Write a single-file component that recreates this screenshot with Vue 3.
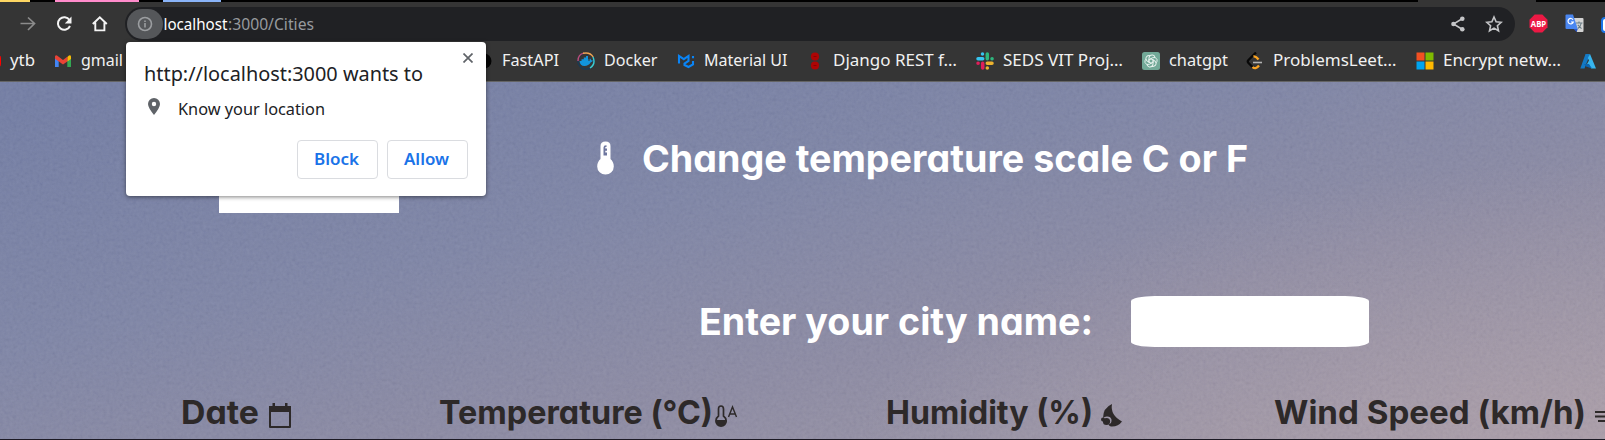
<script setup>
import { h } from 'vue'

// Single line of text whose drawn width is fixed.
const FitText = (p) =>
  h('svg', { class: 'fit', width: p.w, height: p.line, 'aria-label': p.text }, [
    h('text', { x: 0, y: p.base, textLength: p.w, lengthAdjust: 'spacingAndGlyphs' }, p.text),
  ])
FitText.props = ['text', 'w', 'line', 'base']

const bookmarks = [
  { id: 'ytb', label: 'ytb', w: 25 },
  { id: 'gmail', label: 'gmail', w: 42 },
  { id: 'fastapi', label: 'FastAPI', w: 57 },
  { id: 'docker', label: 'Docker', w: 53.5 },
  { id: 'mui', label: 'Material UI', w: 83.5 },
  { id: 'django', label: 'Django REST f…', w: 124 },
  { id: 'slack', label: 'SEDS VIT Proj…', w: 120 },
  { id: 'gpt', label: 'chatgpt', w: 59 },
  { id: 'leet', label: 'ProblemsLeet…', w: 123.5 },
  { id: 'ms', label: 'Encrypt netw…', w: 118 },
  { id: 'azure', label: '', w: 0 },
]
</script>

<template>
  <div class="window">
    <div class="tabs">
      <i class="yellow"></i><i class="pink"></i><i class="blue"></i><i class="active"></i>
    </div>

    <div class="toolbar">
      <svg class="nav" width="125" height="40" viewBox="0 0 125 40" fill="none">
        <path d="M20.5 21.500H34M28 15.500L34.500 21.500L28 28" stroke="#8b8b8b" stroke-width="1.700" />
        <path d="M69.500 18A6.300 6.300 0 1 0 70 24" stroke="#f4f4f4" stroke-width="2" />
        <path d="M71.500 14.500V21.500H64.800Z" fill="#f4f4f4" />
        <path d="M92.800 22L99.800 15.200L106.800 22M95.300 20.500V28.400H104.400V20.500" stroke="#f4f4f4" stroke-width="1.900" />
      </svg>
      <div class="omnibox">
        <span class="info">
          <svg width="16" height="16" viewBox="0 0 16 16" fill="none" stroke="#9c9ea1" stroke-width="1.600"><circle cx="8" cy="8" r="6.500" /><path d="M8 7V11.500M8 4.500V6" /></svg>
        </span>
        <svg class="url" width="152" height="34">
          <text x="0.500" y="23" textLength="64" lengthAdjust="spacingAndGlyphs">localhost</text>
          <text x="65" y="23" textLength="86" lengthAdjust="spacingAndGlyphs">:3000/Cities</text>
        </svg>
        <svg class="share" width="14" height="16" viewBox="0 0 14 16"><path d="M11.500 2.500L2.500 8L11.500 13.500" fill="none" stroke="#c4c5c7" stroke-width="1.500" /><g fill="#c4c5c7"><circle cx="11.300" cy="2.700" r="2.300" /><circle cx="2.500" cy="8" r="2.300" /><circle cx="11.300" cy="13.300" r="2.300" /></g></svg>
        <svg class="star" width="18" height="18" viewBox="0 0 18 18"><path d="M9 2L11.100 6.800L16.200 7.300L12.400 10.700L13.500 15.800L9 13.100L4.500 15.800L5.600 10.700L1.800 7.300L6.900 6.800Z" fill="none" stroke="#c4c5c7" stroke-width="1.600" /></svg>
      </div>
      <svg class="abp" width="19" height="19" viewBox="0 0 19 19"><path d="M5.700.500H13.300L18.500 5.700V13.300L13.300 18.500H5.700L.500 13.300V5.700Z" fill="#ec1944" /><text x="1.800" y="12.900" textLength="15.400" lengthAdjust="spacingAndGlyphs">ABP</text></svg>
      <svg class="translate" width="19" height="19" viewBox="0 0 19 19"><path d="M8 4H17.500Q18.500 4 18.500 5V17Q18.500 18 17.500 18H12Z" fill="#d4d4d4" /><path d="M1.500.500H8L12.800 15H1.500Q.500 15 .500 14V1.500Q.500.500 1.500.500Z" fill="#4a86f0" /><path d="M8.600 15H12.800L11.600 18Z" fill="#2b56c4" /><path d="M8 5.700A2.700 2.700 0 1 0 8.300 8H6" fill="none" stroke="#fff" stroke-width="1.200" /><path d="M11 9H17.500M14 7.500V9M16.300 9Q15.500 13 12.800 14.500M12.800 10.800L16.500 14.700" fill="none" stroke="#687b83" stroke-width="1.100" /></svg>
      <i class="edge"></i>
    </div>

    <div class="bookmarks">
      <div v-for="b in bookmarks" :key="b.id" class="bookmark" :class="b.id">
        <svg class="fav" width="18" height="18" viewBox="0 0 18 18" fill="none">
          <rect v-if="b.id === 'ytb'" x="0" y="3" width="18" height="12" rx="3" fill="#f00" />
          <g v-else-if="b.id === 'gmail'">
            <path d="M1 4V15H4.700V8Z" fill="#4285f4" /><path d="M13.300 8V15H17V4Z" fill="#34a853" />
            <path d="M13.300 5L15 3.500Q17 2.500 17 5V7L13.300 9.600Z" fill="#fbbc04" />
            <path d="M1 5Q1 2.500 3 3.500L9 8L13.300 4.800V9.500L9 12.600L1 6.800Z" fill="#ea4335" />
          </g>
          <circle v-else-if="b.id === 'fastapi'" cx="9" cy="9" r="7.500" fill="#050505" />
          <g v-else-if="b.id === 'docker'">
            <circle cx="9" cy="9" r="8.200" stroke="#173a56" stroke-width="1.300" />
            <path d="M1 9Q1 2 7 1.100" stroke="#bd4c79" stroke-width="1.400" /><path d="M6 1.300Q13-.300 16.200 5" stroke="#f1a350" stroke-width="1.400" /><path d="M16 5Q19 12 13 16" stroke="#3ccbd0" stroke-width="1.400" />
            <path d="M2.500 9H12.500Q12.300 7.500 13 6.500Q14 7.300 14.200 8.300L16 8.600Q15.500 10 13.800 10.200Q11.500 14 7.500 14Q3 14 2.500 9Z" fill="#1295dc" /><path d="M4.500 7.200H11.500V9H4.500ZM6.800 5.500H10V8H6.800ZM9 4H11V8H9Z" fill="#1295dc" />
          </g>
          <path v-else-if="b.id === 'mui'" d="M2 11.500V4L6.800 7.200L11.500 4V9L7.500 11.500V13L11.500 15L16 12.500V9M16 4V6.300" stroke="#0a84f5" stroke-width="2.100" />
          <g v-else-if="b.id === 'django'" fill="#ad0505"><circle cx="9" cy="4.500" r="4.100" /><circle cx="9" cy="13.500" r="4.100" /><path d="M7.500 4.500H10.500M7.500 13.500H10.500" stroke="#8a0000" /></g>
          <g v-else-if="b.id === 'slack'" stroke-width="3.500" stroke-linecap="round">
            <path d="M6.500 2V2.100M2 6.700H6.700" stroke="#36c5f0" /><path d="M11.300 2V6.700M16 6.700H16.100" stroke="#2eb67d" /><path d="M11.300 11.300H16M11.300 16V16.100" stroke="#ecb22e" /><path d="M6.700 11.300V16M2 11.300H2.100" stroke="#e01e5a" />
          </g>
          <g v-else-if="b.id === 'gpt'"><rect width="18" height="18" rx="2.500" fill="#72a998" /><g stroke="#e4f0ec" stroke-width="1"><path v-for="a in 6" :key="a" :transform="`rotate(${a * 60} 9 9)`" d="M7 7.800L10.700 5.700Q13.700 4.500 15 7.500Q15.600 9.500 13.800 11M9 6.700L11.500 8" /></g></g>
          <g v-else-if="b.id === 'leet'" stroke-width="2.300"><path d="M10 .500L2.500 8Q1 9.500 2.500 11L6.500 15" stroke="#080808" /><path d="M7.500 4.500Q10 4 12.500 7.500M6.500 15Q9.500 18 13 13.500" stroke="#fba422" /><path d="M7 10.500H16" stroke="#b3b3b3" stroke-width="1.600" /></g>
          <g v-else-if="b.id === 'ms'"><path d="M.500.500H8.500V8.500H.500Z" fill="#f25022" /><path d="M9.500.500H17.500V8.500H9.500Z" fill="#7fba00" /><path d="M.500 9.500H8.500V17.500H.500Z" fill="#00a4ef" /><path d="M9.500 9.500H17.500V17.500H9.500Z" fill="#ffb900" /></g>
          <g v-else><path d="M6.500 2H11L5.500 16.500H1.300Z" fill="#1479c4" /><path d="M11 2L17 16.500H12.200L8 12L10 8.500L8.800 6Z" fill="#37b5ee" /><path d="M5 12H10L13 16.500L7 14.500Z" fill="#0a64b0" /></g>
        </svg>
        <FitText v-if="b.label" :text="b.label" :w="b.w" :line="24" :base="17" />
      </div>
    </div>

    <main class="page">
      <svg class="grain" width="1605" height="358">
        <filter id="grain" x="0" y="0" width="1" height="1"><feTurbulence type="fractalNoise" baseFrequency=".3" numOctaves="3" seed="4" /><feColorMatrix values=".5 .5 0 0 0 .5 .5 0 0 0 .4 .4 .2 0 0 0 0 0 0 1" /></filter>
        <rect width="1605" height="358" filter="url(#grain)" />
      </svg>
      <div class="scale">
        <span class="box"></span>
        <svg class="thermo" width="17" height="34" viewBox="0 0 17 34"><path d="M3.500 5Q3.500.500 8.500.500T13.500 5V18Q16.800 21 16.800 25.500A8.300 8 0 0 1 .200 25.500Q.200 21 3.500 18Z" fill="#fff" /><path d="M6.500 14.500V6.500Q6.500 4 9.500 4.200V6H8.300V7.500H10V9.700H8.300V11.500H10V14.500Z" fill="#6e779f" /></svg>
        <FitText class="title" text="Change temperature scale C or F" :w="606" :line="50" :base="38" />
      </div>
      <div class="city">
        <FitText class="title" text="Enter your city name:" :w="394" :line="50" :base="38" />
        <input aria-label="City" />
      </div>
      <div class="heads">
        <div class="head date"><FitText text="Date" :w="78" :line="40" :base="30" />
          <svg class="cal" width="24" height="26" viewBox="0 0 24 26"><path d="M2 4H22V24H2Z" fill="none" stroke="#2d2929" stroke-width="2" stroke-linejoin="round" /><path d="M1 3H23V9H1ZM4.500 0H7V4H4.500ZM17 0H19.500V4H17Z" fill="#2d2929" /></svg></div>
        <div class="head temp"><FitText text="Temperature (°C)" :w="274" :line="40" :base="30" />
          <svg width="23" height="22" viewBox="0 0 23 22"><path d="M3.500 11V4Q3.500 1 6 1T8.500 4V11Q11.200 13 11.200 16A5.100 5.100 0 0 1 .900 16Q.900 13 3.500 11Z" fill="none" stroke="#2d2929" stroke-width="1.700" /><path d="M1 15H11Q11 20.500 6 21Q1 20.500 1 15Z" fill="#2d2929" /><path d="M13.500 12L17.500 2L21.500 12M15 9H20" fill="none" stroke="#2d2929" stroke-width="1.400" /></svg></div>
        <div class="head hum"><FitText text="Humidity (%)" :w="207" :line="40" :base="30" />
          <svg width="21" height="23" viewBox="0 0 21 23"><path d="M11 0Q9 11 21 17.500Q17 23 10 22.500Q8.500 22.500 7.500 20.500Q11 19.500 10.500 15.500Q9.500 12 5.500 12.500Q3.500 12.500 2 14Q2 4 11 0Z" fill="#2d2929" /><circle cx="5.500" cy="17.500" r="3.600" fill="#2d2929" /><circle cx="2" cy="15.500" r="2" fill="#2d2929" /></svg></div>
        <div class="head wind"><FitText text="Wind Speed (km/h)" :w="312" :line="40" :base="30" />
          <svg width="25" height="20" viewBox="0 0 25 20"><path d="M0 6H20M0 10.500H25M3 15H20" stroke="#2d2929" stroke-width="2.200" /></svg></div>
      </div>
      <div class="bottom"></div>
    </main>

    <section class="popup">
      <svg class="close" width="10" height="10" viewBox="0 0 10 10"><path d="M.500.500L9.500 9.500M9.500.500L.500 9.500" stroke="#5f6368" stroke-width="1.700" /></svg>
      <FitText class="ask" text="http://localhost:3000 wants to" :w="279" :line="28" :base="21" />
      <div class="perm">
        <svg width="12" height="17" viewBox="0 0 12 17"><path d="M6 0A6 6 0 0 1 12 6Q12 9.500 6 17Q0 9.500 0 6A6 6 0 0 1 6 0ZM6 3.800A2.200 2.200 0 1 0 6 8.200A2.200 2.200 0 1 0 6 3.800Z" fill="#5f6368" fill-rule="evenodd" /></svg>
        <FitText text="Know your location" :w="147" :line="24" :base="18" />
      </div>
      <div class="actions">
        <button><FitText text="Block" :w="45" :line="24" :base="17" /></button>
        <button><FitText text="Allow" :w="45" :line="24" :base="17" /></button>
      </div>
    </section>
  </div>
</template>

<style>
body { margin: 0; overflow: hidden; }
svg.fit { display: block; flex: none; overflow: visible; }
</style>

<style scoped>
.window { position: relative; width: 1605px; height: 440px; overflow: hidden; font-family: "Noto Sans", "Open Sans", sans-serif; background: #353535; }
svg { display: block; flex: none; }
.tabs { display: flex; height: 2px; background: #000; }
.tabs i { height: 2px; }
.yellow { width: 30px; background: #fdd663; }
.pink { width: 84px; margin-left: 25px; background: #ff8bcb; }
.blue { width: 58px; margin-left: 24px; background: #8ab4f8; }
.active { width: 118px; margin-left: 1197px; background: #353535; }
.toolbar { display: flex; height: 39px; }
.omnibox { display: flex; flex: none; align-items: center; width: 1390px; height: 34px; margin-top: 5px; border-radius: 17px; background: #202124; }
.info { display: flex; flex: none; align-items: center; justify-content: center; width: 36px; height: 30px; margin-left: 2px; border-radius: 15px; background: #55575a; }
.url { font-size: 16px; overflow: visible; }
.url text:first-child { fill: #fff; }
.url text:last-child { fill: #969a9e; }
.share { margin-left: 1136px; }
.star { margin-left: 20px; }
.abp { margin: 12px 0 0 14px; font: 700 9px "Open Sans", sans-serif; }
.abp text { fill: #fff; }
.translate { margin: 12px 0 0 17px; }
.edge { flex: none; width: 12px; height: 12px; margin: 15px 0 0 17px; border: 2px solid #1a73e8; border-radius: 4px; background: #fff; }
.bookmarks { display: flex; gap: 18.800px; width: 1640px; height: 40px; margin-left: -17px; font-size: 16.500px; fill: #f1f1f1; }
.bookmark { display: flex; flex: none; gap: 9px; padding-top: 8px; }
.fav { margin-top: 3px; }
.fastapi { margin-left: 333px; }
.page { position: relative; height: 358px; border-top: 1px solid #646464; background: radial-gradient(ellipse 760px 320px at 1605px 400px, rgba(178, 160, 170, .7), rgba(178, 160, 170, 0)), linear-gradient(168deg, #6f7aa3 5%, #7b82a5 38%, #8a88a2 66%, #9b94a4 96%); }
.grain { position: absolute; inset: 0; opacity: .1; }
.scale { position: relative; display: flex; height: 131px; }
.box { width: 180px; height: 131px; margin-left: 219px; background: #fff; }
.thermo { margin: 59px 0 0 198px; }
.title { margin: 52px 0 0 28px; font: 700 37.500px Inter, Lato, sans-serif; font-feature-settings: "cv11"; fill: #fff; }
.city { position: relative; display: flex; height: 135px; padding-top: 82px; box-sizing: border-box; }
.city .title { margin: 2px 0 0 699px; }
.city input { box-sizing: border-box; width: 238px; height: 51px; margin: 1px 0 0 38px; padding: 0; border: 0; border-radius: 10%; background: #fff; outline: none; }
.heads { position: relative; display: flex; height: 91px; font: 700 33px Inter, Lato, sans-serif; font-feature-settings: "cv11"; fill: #2d2929; }
.head { display: flex; flex: none; padding-top: 46px; }
.date { margin-left: 181px; width: 258px; }
.cal { margin: 9px 0 0 9px; }
.temp { width: 447px; }
.temp > svg:last-child { margin: 11px 0 0 2px; }
.hum { width: 388px; }
.hum > svg:last-child { margin: 10px 0 0 8px; }
.wind > svg:last-child { margin: 12px 0 0 9px; }
.bottom { position: relative; height: 1px; background: #1c1a24; }
.popup { position: absolute; left: 126px; top: 42px; width: 360px; height: 154px; border-radius: 4px; background: #fff; box-shadow: 0 1px 4px rgba(0, 0, 0, .5); fill: #202124; }
.close { margin: 11px 0 0 337px; }
.ask { margin: -3px 0 0 18px; font-size: 19.500px; }
.perm { display: flex; margin: 9px 0 0 22px; font-size: 16.300px; }
.perm > svg:first-child { margin: 1px 18px 0 0; }
.actions { display: flex; justify-content: flex-end; gap: 9px; margin: 19px 18px 0 0; }
.actions button { display: flex; align-items: center; justify-content: center; box-sizing: border-box; width: 81px; height: 39px; padding: 0 2px 0 0; border: 1px solid #dadce0; border-radius: 4px; background: #fff; font: 600 16.300px "Noto Sans", sans-serif; fill: #1a73e8; }
</style>
